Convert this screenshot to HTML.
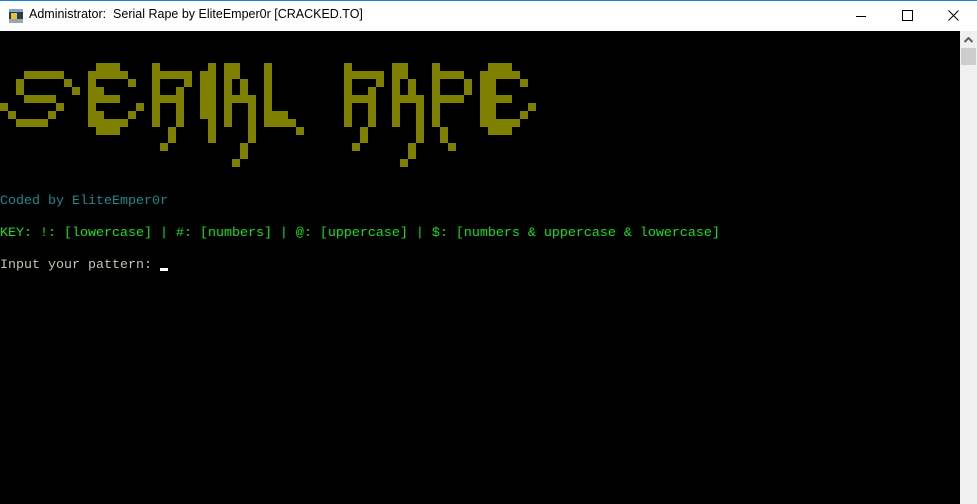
<!DOCTYPE html>
<html><head><meta charset="utf-8"><style>
body{margin:0;width:977px;height:504px;overflow:hidden;background:#000;position:relative;font-family:"Liberation Sans",sans-serif}
#tb{position:absolute;left:0;top:0;width:977px;height:31px;background:#fff;border-top:1px solid #1883d7;box-sizing:border-box}
#tb .t{position:absolute;left:29px;top:6px;font-size:12.5px;color:#000}
#sb{position:absolute;left:960px;top:31px;width:17px;height:473px;background:#f0f0f0}
#th{position:absolute;left:961px;top:48px;width:15px;height:17px;background:#cdcdcd}
.l{position:absolute;left:0;font-family:"Liberation Mono",monospace;font-size:13.33px;white-space:pre;line-height:16px}
.b{position:absolute;background:#808000;width:8px;height:8px}
</style></head><body>
<div id="tb">
<svg style="position:absolute;left:8px;top:7px" width="16" height="16"><rect x="1" y="1" width="14" height="14" fill="#2a3a5a"/><rect x="1" y="1" width="14" height="3" fill="#7fa6d0"/><rect x="3" y="5" width="6" height="6" fill="#e8c030"/><rect x="1" y="11" width="14" height="4" fill="#9aa"/></svg>
<div class="t">Administrator:&nbsp; Serial Rape by EliteEmper0r [CRACKED.TO]</div>
<svg style="position:absolute;left:856px;top:9px" width="12" height="12"><line x1="0" y1="6.5" x2="10" y2="6.5" stroke="#000"/></svg>
<svg style="position:absolute;left:902px;top:9px" width="12" height="12"><rect x="0.5" y="0.5" width="10" height="10" fill="none" stroke="#000"/></svg>
<svg style="position:absolute;left:948px;top:9px" width="12" height="12"><path d="M0.5 0.5L10.5 10.5M10.5 0.5L0.5 10.5" stroke="#000"/></svg>
</div>
<div id="sb"><svg style="position:absolute;left:4px;top:6px" width="9" height="6"><path d="M0.5 5L4.5 1L8.5 5" stroke="#606060" stroke-width="2" fill="none"/></svg></div>
<div id="th"></div>
<div id="art"></div>
<div class="l" style="top:194px;color:#1a8a8a">Coded by EliteEmper0r</div>
<div class="l" style="top:226px;color:#16e016">KEY: !: [lowercase] | #: [numbers] | @: [uppercase] | $: [numbers &amp; uppercase &amp; lowercase]</div>
<div class="l" style="top:258px;color:#c8c0b0">Input your pattern: </div>
<div style="position:absolute;left:160px;top:268px;width:8px;height:3px;background:#fff"></div>
<script>
var c=[];function a(r,c0,c1){for(var x=c0;x<=c1;x++)c.push([r,x]);}
function v(col,r0,r1){for(var r=r0;r<=r1;r++)c.push([r,col]);}
a(1,3,7);a(2,2,2);a(2,8,8);a(3,2,2);a(3,9,9);a(4,3,6);a(5,0,0);a(5,7,7);a(6,1,1);a(6,6,6);a(7,2,5);
a(0,12,14);a(1,11,15);a(2,11,11);a(2,16,16);a(3,11,12);a(4,11,14);a(5,11,11);a(5,17,17);a(6,11,12);a(6,16,16);a(7,11,15);a(8,12,14);
v(19,0,7);a(1,19,23);a(2,23,23);a(3,22,22);a(4,19,22);v(22,5,7);v(21,8,9);a(10,20,20);
v(25,1,6);v(26,0,9);
v(28,0,7);a(0,29,29);a(1,29,29);v(30,2,3);a(4,28,31);v(31,5,9);v(30,10,11);a(12,29,29);
v(33,0,7);a(6,33,35);a(7,33,36);a(8,37,37);
v(43,0,7);a(1,43,47);a(2,47,47);a(3,46,46);a(4,43,46);v(46,5,7);v(45,8,9);a(10,44,44);
v(49,0,7);a(0,50,50);a(1,50,50);v(51,2,3);a(4,49,52);v(52,5,9);a(10,51,51);a(11,51,51);a(12,50,50);
v(54,0,7);a(1,54,57);v(58,2,3);a(4,54,57);v(55,8,9);a(10,56,56);
a(0,61,63);a(1,60,64);a(2,60,61);a(2,65,65);a(3,60,61);a(4,60,63);a(5,60,61);a(5,66,66);a(6,60,61);a(6,65,65);a(7,60,64);a(8,61,63);
var h='';c.forEach(function(p){h+='<div class="b" style="left:'+(p[1]*8)+'px;top:'+(63+p[0]*8)+'px"></div>';});
document.getElementById('art').innerHTML=h;
</script>
</body></html>
